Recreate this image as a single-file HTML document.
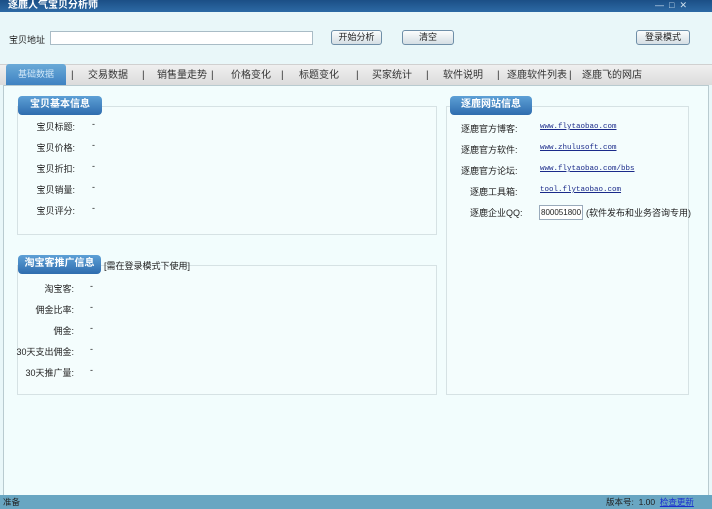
<!DOCTYPE html>
<html><head><meta charset="utf-8"><style>
*{margin:0;padding:0;box-sizing:border-box}
body{width:712px;height:509px;overflow:hidden;background:#e9f7f9;font-family:"Liberation Sans","Noto Sans CJK SC",sans-serif;font-size:9px;color:#222;position:relative}
.a{position:absolute}
.title{left:0;top:0;width:712px;height:12px;background:linear-gradient(#1b4f86,#2d6aa5);color:#fff;font-weight:bold;font-size:10px;padding-left:8px;line-height:11px}
.btn{border:1px solid #6f8fa8;border-radius:3px;background:linear-gradient(#fbfdfd,#d4dee4);text-align:center;line-height:13px;height:15px;font-size:9px}
.tabs{left:0;top:64px;width:712px;height:21px;background:linear-gradient(#f0f0f0,#dcdcdc);border-top:1px solid #d0d0d0}
.tab{top:69px;font-size:10px;color:#333;line-height:14px}
.content{left:3px;top:85px;width:706px;height:411px;background:#f2fdfd;border:1px solid #b9cbd0}
.box{border:1px solid #d6e2e4;background:#f4fdfd}
.pill{background:linear-gradient(#5da0d6,#2e6cae);color:#fff;font-weight:bold;border-radius:4px;font-size:10px;line-height:18px;text-align:center;height:19px}
.lbl{font-size:9px;text-align:right;width:60px}
.lnk{font-family:"Liberation Mono",monospace;font-size:7.5px;color:#1a2a8a;text-decoration:underline}
.status{left:0;top:495px;width:712px;height:14px;background:#69a6c2;font-size:8.5px;line-height:14px}
</style></head><body>
<div class="a title">逐鹿人气宝贝分析师</div>
<div class="a" style="left:655px;top:0;color:#cfe0ee;font-size:9px;line-height:10px">—&nbsp;&nbsp;□&nbsp;&nbsp;✕</div>
<div class="a" style="left:9px;top:33px">宝贝地址</div>
<div class="a" style="left:50px;top:31px;width:263px;height:14px;background:#fff;border:1px solid #a9bcc6"></div>
<div class="a btn" style="left:331px;top:30px;width:51px">开始分析</div>
<div class="a btn" style="left:402px;top:30px;width:52px">清空</div>
<div class="a btn" style="left:636px;top:30px;width:54px">登录模式</div>
<div class="a tabs"></div>
<div class="a" style="left:6px;top:64px;width:60px;height:21px;background:linear-gradient(#6aaad8,#3f82c2);border-radius:3px 3px 0 0;color:#cfe6f7;text-align:center;line-height:21px">基础数据</div>
<div class="a tab" style="left:71px">|</div>
<div class="a tab" style="left:88px">交易数据</div>
<div class="a tab" style="left:142px">|</div>
<div class="a tab" style="left:157px">销售量走势</div>
<div class="a tab" style="left:211px">|</div>
<div class="a tab" style="left:231px">价格变化</div>
<div class="a tab" style="left:281px">|</div>
<div class="a tab" style="left:299px">标题变化</div>
<div class="a tab" style="left:356px">|</div>
<div class="a tab" style="left:372px">买家统计</div>
<div class="a tab" style="left:426px">|</div>
<div class="a tab" style="left:443px">软件说明</div>
<div class="a tab" style="left:497px">|</div>
<div class="a tab" style="left:507px">逐鹿软件列表</div>
<div class="a tab" style="left:569px">|</div>
<div class="a tab" style="left:582px">逐鹿飞的网店</div>
<div class="a content"></div>
<div class="a box" style="left:17px;top:106px;width:420px;height:129px"></div>
<div class="a pill" style="left:18px;top:96px;width:84px">宝贝基本信息</div>
<div class="a box" style="left:17px;top:265px;width:420px;height:130px"></div>
<div class="a pill" style="left:18px;top:255px;width:83px">淘宝客推广信息</div>
<div class="a" style="left:104px;top:259px;font-size:9px">[需在登录模式下使用]</div>
<div class="a box" style="left:446px;top:106px;width:243px;height:289px"></div>
<div class="a pill" style="left:450px;top:96px;width:82px">逐鹿网站信息</div>

<div class="a lbl" style="left:15px;top:120px">宝贝标题:</div><div class="a" style="left:92px;top:119px">-</div>
<div class="a lbl" style="left:15px;top:141px">宝贝价格:</div><div class="a" style="left:92px;top:140px">-</div>
<div class="a lbl" style="left:15px;top:162px">宝贝折扣:</div><div class="a" style="left:92px;top:161px">-</div>
<div class="a lbl" style="left:15px;top:183px">宝贝销量:</div><div class="a" style="left:92px;top:182px">-</div>
<div class="a lbl" style="left:15px;top:204px">宝贝评分:</div><div class="a" style="left:92px;top:203px">-</div>

<div class="a lbl" style="left:14px;top:282px">淘宝客:</div><div class="a" style="left:90px;top:281px">-</div>
<div class="a lbl" style="left:14px;top:303px">佣金比率:</div><div class="a" style="left:90px;top:302px">-</div>
<div class="a lbl" style="left:14px;top:324px">佣金:</div><div class="a" style="left:90px;top:323px">-</div>
<div class="a lbl" style="left:4px;top:345px;width:70px">30天支出佣金:</div><div class="a" style="left:90px;top:344px">-</div>
<div class="a lbl" style="left:4px;top:366px;width:70px">30天推广量:</div><div class="a" style="left:90px;top:365px">-</div>

<div class="a" style="left:461px;top:122px">逐鹿官方博客:</div><div class="a lnk" style="left:540px;top:123px">www.flytaobao.com</div>
<div class="a" style="left:461px;top:143px">逐鹿官方软件:</div><div class="a lnk" style="left:540px;top:144px">www.zhulusoft.com</div>
<div class="a" style="left:461px;top:164px">逐鹿官方论坛:</div><div class="a lnk" style="left:540px;top:165px">www.flytaobao.com/bbs</div>
<div class="a" style="left:470px;top:185px">逐鹿工具箱:</div><div class="a lnk" style="left:540px;top:186px">tool.flytaobao.com</div>
<div class="a" style="left:470px;top:206px">逐鹿企业QQ:</div>
<div class="a" style="left:539px;top:205px;width:44px;height:15px;background:#fff;border:1px solid #9ab;font-size:8px;line-height:13px;padding-left:1px">800051800</div>
<div class="a" style="left:586px;top:206px">(软件发布和业务咨询专用)</div>

<div class="a status"><span style="padding-left:3px">准备</span></div>
<div class="a" style="left:606px;top:496px;font-size:8.5px;line-height:12px">版本号:&nbsp;&nbsp;1.00&nbsp;&nbsp;<span style="color:#1a2fd0;text-decoration:underline">检查更新</span></div>
</body></html>
